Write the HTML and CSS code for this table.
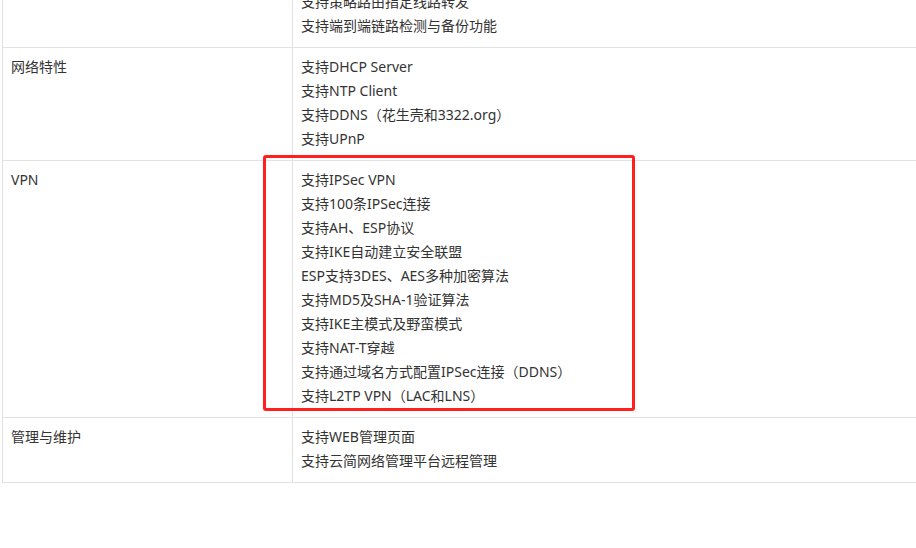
FILE: index.html
```html
<!DOCTYPE html>
<html lang="zh-CN">
<head>
<meta charset="utf-8">
<link rel="stylesheet" href="styles.css">
</head>
<body>
<div class="page">
  <table class="spec">
    <tr>
      <td class="name"></td>
      <td class="val">
        <p>支持策略路由指定线路转发</p>
        <p>支持端到端链路检测与备份功能</p>
      </td>
    </tr>
    <tr>
      <td class="name">网络特性</td>
      <td class="val">
        <p>支持DHCP Server</p>
        <p>支持NTP Client</p>
        <p>支持DDNS（花生壳和3322.org）</p>
        <p>支持UPnP</p>
      </td>
    </tr>
    <tr>
      <td class="name">VPN</td>
      <td class="val">
        <p>支持IPSec VPN</p>
        <p>支持100条IPSec连接</p>
        <p>支持AH、ESP协议</p>
        <p>支持IKE自动建立安全联盟</p>
        <p>ESP支持3DES、AES多种加密算法</p>
        <p>支持MD5及SHA-1验证算法</p>
        <p>支持IKE主模式及野蛮模式</p>
        <p>支持NAT-T穿越</p>
        <p>支持通过域名方式配置IPSec连接（DDNS）</p>
        <p>支持L2TP VPN（LAC和LNS）</p>
      </td>
    </tr>
    <tr>
      <td class="name">管理与维护</td>
      <td class="val">
        <p>支持WEB管理页面</p>
        <p>支持云简网络管理平台远程管理</p>
      </td>
    </tr>
  </table>
  <div class="highlight"></div>
</div>
</body>
</html>
```

FILE: styles.css
```css
html, body {
  margin: 0;
  padding: 0;
  background: #ffffff;
  overflow: hidden;
}
body {
  width: 916px;
  height: 548px;
}
.page {
  position: relative;
  margin-top: -18px;
  padding-left: 2px;
  font-family: "Microsoft YaHei", "Noto Sans", "Noto Sans CJK SC", sans-serif;
  font-size: 14px;
  color: #333333;
}
.spec {
  border-collapse: collapse;
  width: 1000px;
  table-layout: fixed;
}
.spec td {
  border: 1px solid #e2e2e2;
  padding: 7px 8px 9px;
  vertical-align: top;
  line-height: 24px;
}
.spec td.name {
  width: 273px;
}
.spec p {
  margin: 0;
  line-height: 24px;
  white-space: nowrap;
}
.highlight {
  position: absolute;
  left: 263px;
  top: 173px;
  width: 366px;
  height: 250px;
  border: 3px solid #ff1f1f;
  border-radius: 3px;
}
```
